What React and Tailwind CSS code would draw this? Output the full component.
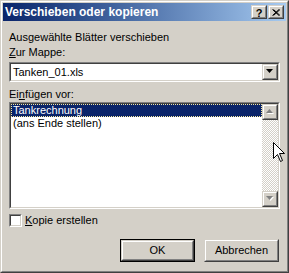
import React from "react"

function Raised({ className = "", children }) {
  return (
    <div className={`border border-t-[#d4d0c8] border-l-[#d4d0c8] border-b-[#404040] border-r-[#404040] ${className}`}>
      <div className="w-full h-full border border-t-white border-l-white border-b-[#808080] border-r-[#808080] bg-[#d4d0c8] flex items-center justify-center">
        {children}
      </div>
    </div>
  )
}

function Sunken({ className = "", innerClass = "", children }) {
  return (
    <div className={`border border-t-[#808080] border-l-[#808080] border-b-white border-r-white ${className}`}>
      <div className={`w-full h-full border border-t-[#404040] border-l-[#404040] border-b-[#d4d0c8] border-r-[#d4d0c8] bg-white ${innerClass}`}>
        {children}
      </div>
    </div>
  )
}

function Arrow({ down = true, disabled = false }) {
  const pts = down ? "0,0 7,0 3.5,4" : "3.5,0 7,4 0,4"
  return (
    <svg width="9" height="6" viewBox="0 0 9 6">
      {disabled && <polygon points={pts} fill="#ffffff" transform="translate(1,1)" />}
      <polygon points={pts} fill={disabled ? "#808080" : "#000000"} />
    </svg>
  )
}

function Button({ label, isDefault }) {
  if (isDefault) {
    return (
      <div className="w-[75px] h-[23px] border border-black">
        <Raised className="w-full h-full">
          <span>{label}</span>
        </Raised>
      </div>
    )
  }
  return (
    <Raised className="w-[75px] h-[23px]">
      <span>{label}</span>
    </Raised>
  )
}

export default function App() {
  return (
    <div className="relative w-[289px] h-[273px] font-['Liberation_Sans',Arial,sans-serif] text-[11px] leading-[13px] text-black select-none">
      <div className="w-full h-full border border-t-[#d4d0c8] border-l-[#d4d0c8] border-b-[#404040] border-r-[#404040]">
        <div className="w-full h-full border border-t-white border-l-white border-b-[#808080] border-r-[#808080] bg-[#d4d0c8] p-px flex flex-col">

          {/* title bar */}
          <div className="h-[18px] flex items-center pl-[2px] pr-[2px] bg-gradient-to-r from-[#0a246a] to-[#a6caf0]">
            <span className="flex-1 font-bold text-white text-[12px]">Verschieben oder kopieren</span>
            <Raised className="w-[16px] h-[14px]">
              <span className="font-bold text-[11px] leading-[10px] pt-px">?</span>
            </Raised>
            <Raised className="w-[16px] h-[14px] ml-[1px]">
              <svg width="8" height="7" viewBox="0 0 8 7">
                <path d="M0.5 0.5 L7 6.5 M1.5 0.5 L8 6.5 M7 0.5 L0.5 6.5 M8 0.5 L1.5 6.5" stroke="#000" strokeWidth="1" />
              </svg>
            </Raised>
          </div>

          {/* content */}
          <div className="flex flex-col px-[6px] pt-[10px]">
            <div>Ausgewählte Blätter verschieben</div>

            <div className="mt-[2px]">
              <span className="underline">Z</span>ur Mappe:
            </div>

            <Sunken className="mt-[3px] w-[271px] h-[20px]" innerClass="flex items-center">
              <span className="flex-1 pl-[2px]">Tanken_01.xls</span>
              <Raised className="w-[16px] h-[16px]">
                <Arrow down />
              </Raised>
            </Sunken>

            <div className="mt-[6px]">
              Ei<span className="underline">n</span>fügen vor:
            </div>

            <Sunken className="mt-[1px] w-[271px] h-[107px]" innerClass="flex">
              <div className="flex-1 flex flex-col">
                <div className="h-[13px] bg-[#0a246a] text-white border border-dotted border-[#f5e9a0] pl-px leading-[11px]">
                  Tankrechnung
                </div>
                <div className="h-[13px] pl-[2px]">(ans Ende stellen)</div>
              </div>
              <div className="w-[16px] flex flex-col">
                <Raised className="w-[16px] h-[16px]">
                  <Arrow down={false} disabled />
                </Raised>
                <div className="flex-1 bg-[repeating-conic-gradient(#d4d0c8_0_25%,#ffffff_0_50%)] bg-[length:2px_2px]" />
                <Raised className="w-[16px] h-[16px]">
                  <Arrow down disabled />
                </Raised>
              </div>
            </Sunken>

            <div className="mt-[5px] flex items-center">
              <Sunken className="w-[13px] h-[13px]" />
              <span className="ml-[3px]">
                <span className="underline">K</span>opie erstellen
              </span>
            </div>

            <div className="mt-[12px] flex justify-end gap-[9px] pr-px">
              <Button label="OK" isDefault />
              <Button label="Abbrechen" />
            </div>
          </div>
        </div>
      </div>

      {/* mouse pointer */}
      <svg className="absolute left-[273px] top-[142px]" width="13" height="21" viewBox="0 0 13 21">
        <path d="M0.5 0.5 L0.5 16.5 L4.5 12.5 L7.5 19.5 L9.5 18.5 L6.5 11.5 L11.5 11.5 Z" fill="#ffffff" stroke="#000000" strokeWidth="1" />
      </svg>
    </div>
  )
}
